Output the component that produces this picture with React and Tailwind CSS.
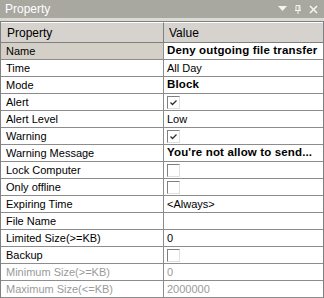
import React from "react";

const rows = [
  { k: "Name", v: "Deny outgoing file transfer", bold: true, sel: true },
  { k: "Time", v: "All Day" },
  { k: "Mode", v: "Block", bold: true },
  { k: "Alert", cb: true, checked: true },
  { k: "Alert Level", v: "Low" },
  { k: "Warning", cb: true, checked: true },
  { k: "Warning Message", v: "You're not allow to send...", bold: true },
  { k: "Lock Computer", cb: true },
  { k: "Only offline", cb: true },
  { k: "Expiring Time", v: "<Always>" },
  { k: "File Name", v: "" },
  { k: "Limited Size(>=KB)", v: "0" },
  { k: "Backup", cb: true },
  { k: "Minimum Size(>=KB)", v: "0", dis: true },
  { k: "Maximum Size(<=KB)", v: "2000000", dis: true },
];

function Check({ checked }) {
  return (
    <div className="w-[13px] h-[13px] border-t border-l border-t-[#808080] border-l-[#808080] border-b border-r border-b-[#e0e0e0] border-r-[#e0e0e0] bg-white flex items-center justify-center">
      {checked && (
        <svg width="9" height="9" viewBox="0 0 9 9">
          <path d="M1.5 4.5 L3.5 6.5 L7.5 2.5" fill="none" stroke="#303030" strokeWidth="1.3" />
        </svg>
      )}
    </div>
  );
}

export default function App() {
  return (
    <div
      className="w-[324px] h-[298px] bg-white overflow-hidden flex flex-col text-[11px] text-black"
      style={{ fontFamily: '"Liberation Sans", Arial, sans-serif' }}
    >
      <div className="h-[18px] bg-[#a8a7a0] flex items-center justify-between pl-[5px] pr-[6px] text-white text-[12px]">
        <span>Property</span>
        <div className="flex items-center gap-[7px]">
          <svg width="9" height="6" viewBox="0 0 9 6">
            <path d="M0 0 H9 L4.5 5 Z" fill="#f4f4f4" />
          </svg>
          <svg width="8" height="9" viewBox="0 0 8 9">
            <path d="M2 0.5 H6 V5.5 H1 V5.5 H7 M2 0.5 V5.5 M5 0.5 V5.5 M4 5.5 V9" fill="none" stroke="#f4f4f4" strokeWidth="1" />
          </svg>
          <svg width="9" height="9" viewBox="0 0 9 9">
            <path d="M1 1 L8 8 M8 1 L1 8" stroke="#f4f4f4" strokeWidth="1.6" />
          </svg>
        </div>
      </div>
      <div className="h-[3px] bg-[#dcdad5]" />
      <div className="flex-1 flex flex-col border-l border-r border-t border-[#808080]">
        <div className="h-[21px] flex bg-[#d6d3ce] border-b border-[#808080] text-[12px]">
          <div className="w-[163px] border-r border-[#808080] flex items-center pl-[6px] border-t border-t-white">Property</div>
          <div className="flex-1 flex items-center pl-[5px] border-t border-t-white">Value</div>
        </div>
        {rows.map((r) => (
          <div key={r.k} className="h-[17px] flex border-b border-[#8c8c8c] shrink-0">
            <div
              className={`w-[163px] border-r border-[#8c8c8c] flex items-center pl-[5px] text-[11px] ${
                r.sel ? "bg-[#d4d0c8]" : ""
              } ${r.dis ? "text-[#9a9a9a]" : ""}`}
            >
              {r.k}
            </div>
            <div
              className={`flex-1 flex items-center pl-[3px] whitespace-nowrap overflow-hidden ${
                r.bold ? "font-bold text-[11.5px] tracking-[0.15px]" : "text-[11px]"
              } ${r.dis ? "text-[#9a9a9a]" : ""}`}
            >
              {r.cb ? <Check checked={r.checked} /> : r.v}
            </div>
          </div>
        ))}
      </div>
    </div>
  );
}
